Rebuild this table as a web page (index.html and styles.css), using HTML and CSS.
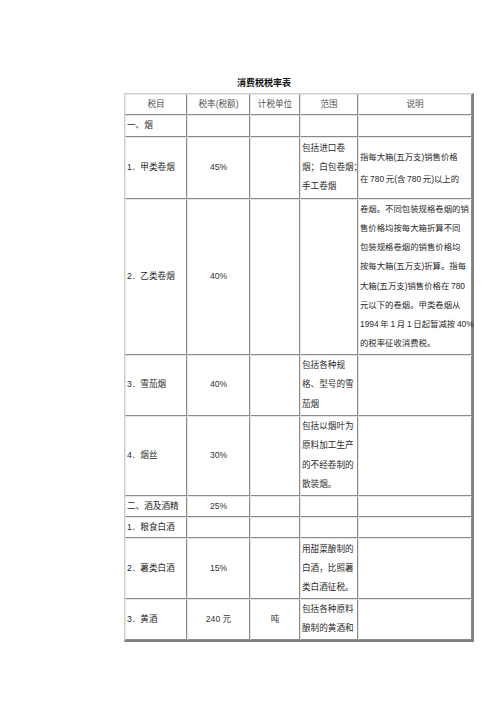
FILE: index.html
```html
<!DOCTYPE html>
<html lang="zh">
<head>
<meta charset="utf-8">
<title>消费税税率表</title>
<link rel="stylesheet" href="styles.css">
</head>
<body>
<div class="page">
  <div class="title">消费税税率表</div>
  <table class="tax">
    <colgroup>
      <col class="c1"><col class="c2"><col class="c3"><col class="c4"><col class="c5">
    </colgroup>
    <tr class="r21">
      <th>税目</th><th>税率(税额)</th><th>计税单位</th><th>范围</th><th>说明</th>
    </tr>
    <tr class="r21">
      <td>一、烟</td><td></td><td></td><td></td><td></td>
    </tr>
    <tr class="r62">
      <td>1．甲类卷烟</td><td class="num">45%</td><td></td>
      <td class="nw">包括进口卷<br>烟；白包卷烟；<br>手工卷烟</td>
      <td class="nw ex lh22">指每大箱(五万支)销售价格<br>在 780 元(含 780 元)以上的</td>
    </tr>
    <tr class="r156">
      <td>2．乙类卷烟</td><td class="num">40%</td><td></td><td></td>
      <td class="nw ex">卷烟。不同包装规格卷烟的销<br>售价格均按每大箱折算不同<br>包装规格卷烟的销售价格均<br>按每大箱(五万支)折算。指每<br>大箱(五万支)销售价格在 780<br>元以下的卷烟。甲类卷烟从<br>1994 年 1 月 1 日起暂减按 40%<br>的税率征收消费税。</td>
    </tr>
    <tr class="r61">
      <td>3．雪茄烟</td><td class="num">40%</td><td></td>
      <td class="nw">包括各种规<br>格、型号的雪<br>茄烟</td><td></td>
    </tr>
    <tr class="r80">
      <td>4．烟丝</td><td class="num">30%</td><td></td>
      <td class="nw">包括以烟叶为<br>原料加工生产<br>的不经卷制的<br>散装烟。</td><td></td>
    </tr>
    <tr class="r21">
      <td>二、酒及酒精</td><td class="num">25%</td><td></td><td></td><td></td>
    </tr>
    <tr class="r21">
      <td>1．粮食白酒</td><td></td><td></td><td></td><td></td>
    </tr>
    <tr class="r61">
      <td>2．薯类白酒</td><td class="num">15%</td><td></td>
      <td class="nw">用甜菜酿制的<br>白酒，比照薯<br>类白酒征税。</td><td></td>
    </tr>
    <tr class="r40">
      <td>3．黄酒</td><td class="num">240 元</td><td class="num">吨</td>
      <td class="nw">包括各种原料<br>酿制的黄酒和</td><td></td>
    </tr>
  </table>
</div>
</body>
</html>
```

FILE: styles.css
```css
html, body {
  margin: 0;
  padding: 0;
  background: #ffffff;
}

.page {
  padding: 76px 0 0 124px;
  font-family: "Liberation Sans", "Noto Sans CJK SC", sans-serif;
  color: #2a2a2a;
}

.title {
  width: 350px;
  padding-left: 113px;
  box-sizing: border-box;
  font-size: 9px;
  line-height: 14px;
  font-weight: bold;
  color: #111;
  margin-bottom: 3px;
}

.tax {
  border-collapse: separate;
  border-spacing: 0;
  table-layout: fixed;
  width: 350px;
  border-style: solid;
  border-width: 1px 2px 2px 1px;
  border-color: #d4d0c8 #808080 #808080 #d4d0c8;
  font-size: 8.6px;
  line-height: 19.25px;
}

.c1 { width: 62px; }
.c2 { width: 63px; }
.c3 { width: 50px; }
.c4 { width: 58px; }
.c5 { width: 114px; }

.tax th,
.tax td {
  border-style: solid;
  border-width: 1px;
  border-color: #e6e6e6 #8a8a8a #8a8a8a #e6e6e6;
  padding: 0 1px;
  vertical-align: middle;
  text-align: left;
  font-weight: normal;
  overflow: visible;
}

.tax th {
  text-align: center;
  color: #555;
}

.tax td.num {
  text-align: center;
  color: #333;
}

.nw {
  white-space: nowrap;
}

.tax td.ex {
  font-size: 8.4px;
  word-spacing: -0.6px;
  padding: 0 0 0 1px;
}

.tax td.lh22 {
  line-height: 22px;
}

.r21 { height: 21px; }
.r40 { height: 40px; }
.r61 { height: 61px; }
.r62 { height: 62px; }
.r80 { height: 80px; }
.r156 { height: 156px; }
```
